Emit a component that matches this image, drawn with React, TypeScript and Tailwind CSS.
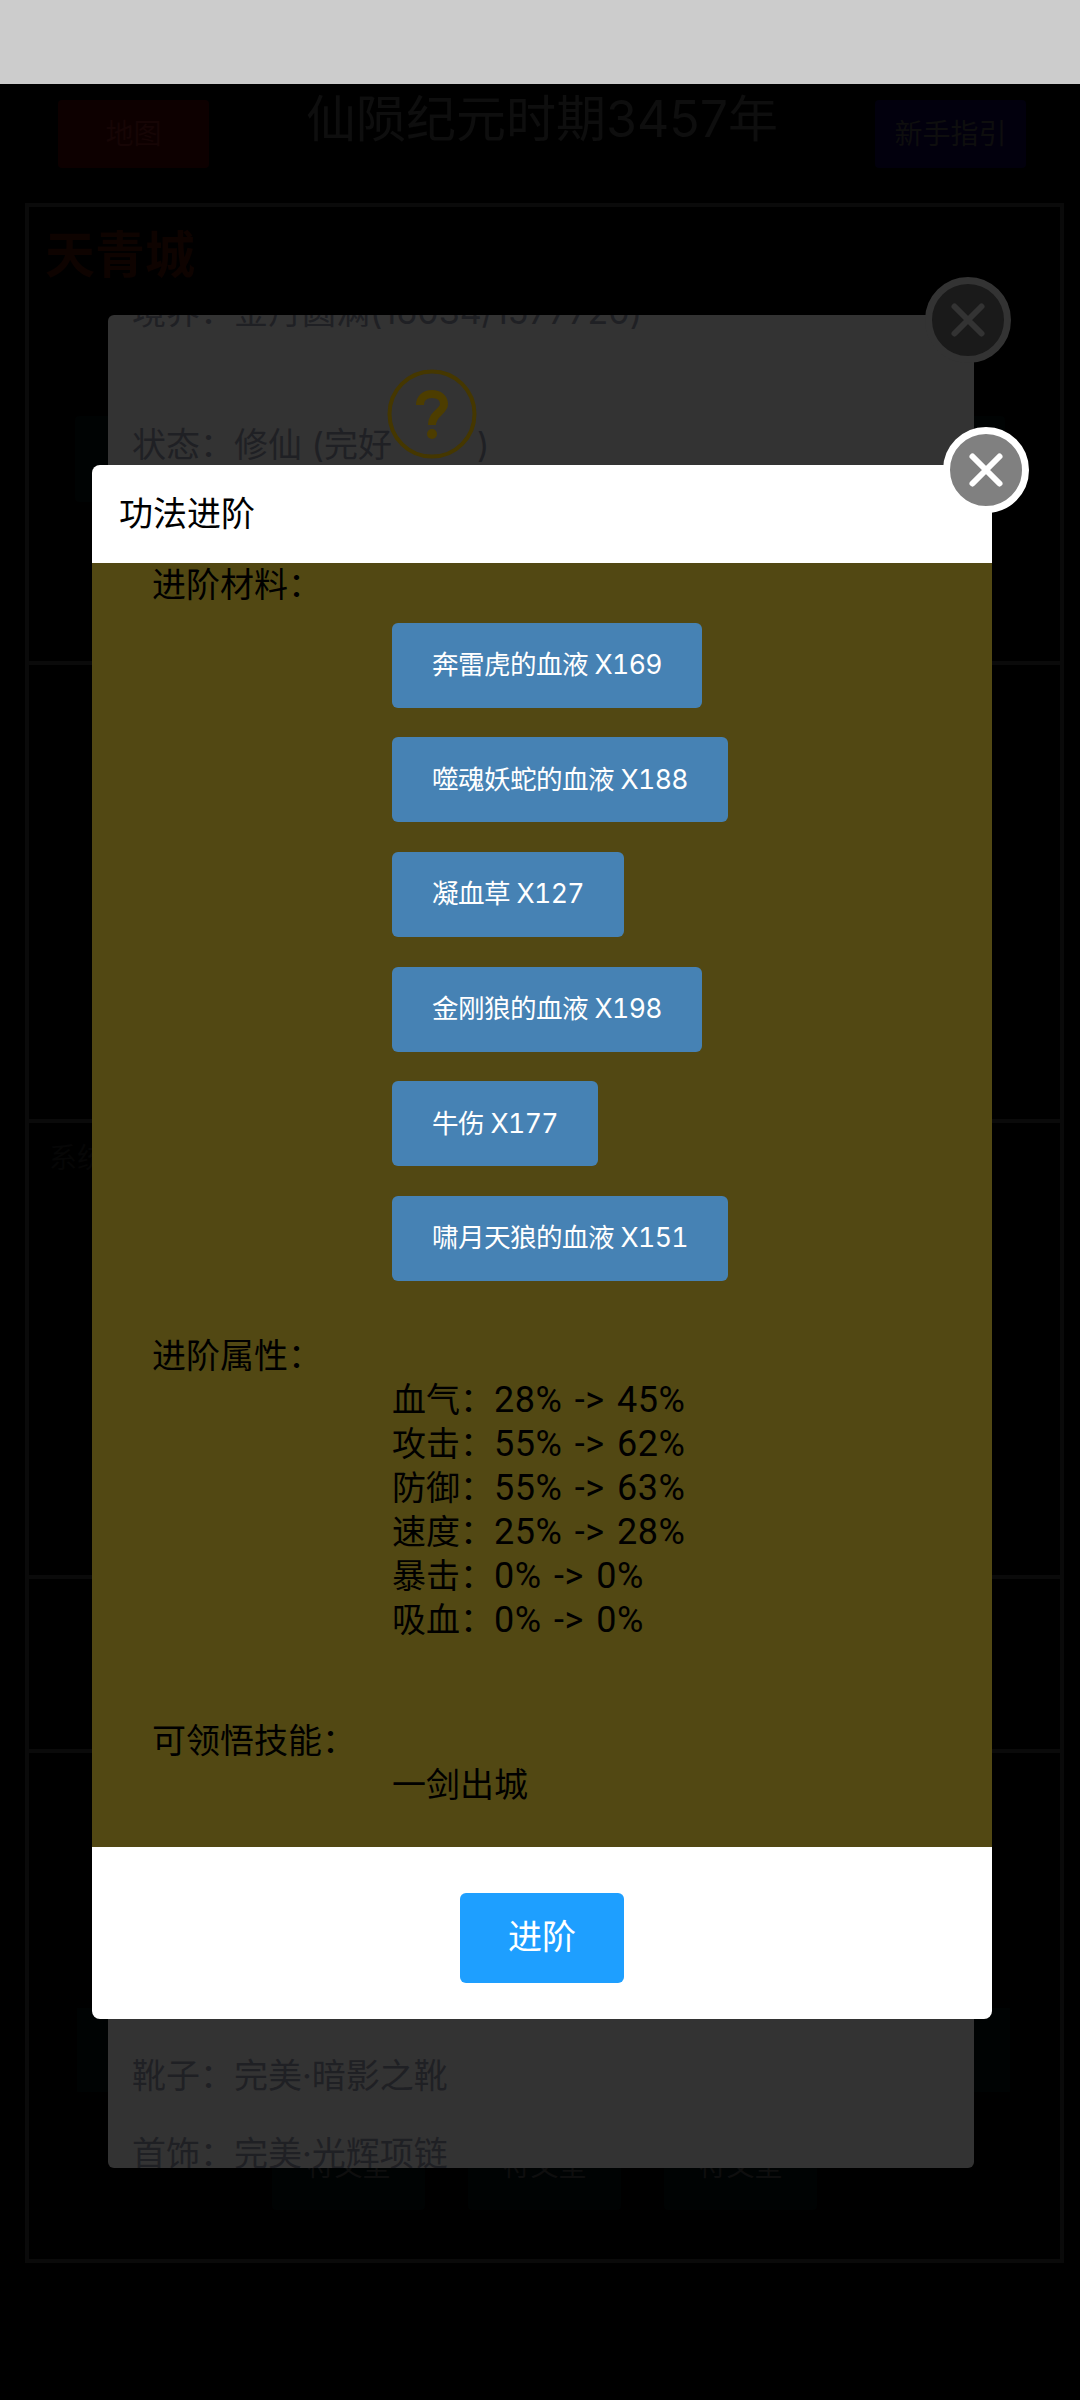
import React from 'react';

const FONT = 'font-["Inter","Noto_Sans_CJK_SC",sans-serif] [font-variant-ligatures:none]';

const materials = [
  '奔雷虎的血液 X169',
  '噬魂妖蛇的血液 X188',
  '凝血草 X127',
  '金刚狼的血液 X198',
  '牛伤 X177',
  '啸月天狼的血液 X151',
];

const stats = [
  ['血气：', '28% -> 45%'],
  ['攻击：', '55% -> 62%'],
  ['防御：', '55% -> 63%'],
  ['速度：', '25% -> 28%'],
  ['暴击：', '0% -> 0%'],
  ['吸血：', '0% -> 0%'],
];

interface CloseButtonProps {
  dim?: boolean;
}

const CloseButton: React.FC<CloseButtonProps> = ({ dim }) => (
  <svg
    viewBox="0 0 86 86"
    className="absolute right-[-37px] top-[-38px] h-[86px] w-[86px]"
  >
    <circle
      cx="43"
      cy="43"
      r="39.5"
      fill={dim ? '#1a1a1a' : '#808080'}
      stroke={dim ? '#333333' : '#ffffff'}
      strokeWidth="7"
    />
    <path
      d="M29.5 29.5L56.5 56.5M56.5 29.5L29.5 56.5"
      stroke={dim ? '#333333' : '#ffffff'}
      strokeWidth="6"
      strokeLinecap="round"
    />
  </svg>
);

const HelpIcon = () => (
  <svg viewBox="0 0 90 92" className="-ml-[5px] h-[92px] w-[90px] shrink-0 self-start">
    <circle cx="45" cy="46" r="42.5" fill="none" stroke="#453700" strokeWidth="4" />
    <path
      d="M33 37C33 30 38 26 45 26C52 26 57 30 57 36C57 44 45 45 45 57"
      fill="none"
      stroke="#4d3d00"
      strokeWidth="8"
    />
    <circle cx="45" cy="66" r="5" fill="#4d3d00" />
  </svg>
);

export default function App() {
  return (
    <div className={`relative min-h-[2400px] bg-black ${FONT}`}>
      <div className="h-[84px] bg-[#cccccc]" />

      {/* dimmed page behind the dialogs */}
      <div className="flex h-[119px] items-start justify-between pl-[58px] pr-[54px] pt-[11px]">
        <div className="mt-[5px] flex h-[68px] w-[151px] items-center justify-center rounded bg-[#0d0000] text-[28px] text-[#160505]">
          地图
        </div>
        <div className="text-[50px] leading-[48px] text-[#0e0e0e]">仙陨纪元时期3457年</div>
        <div className="mt-[5px] flex h-[68px] w-[151px] items-center justify-center rounded bg-[#02000d] text-[28px] text-[#0e0e0e]">
          新手指引
        </div>
      </div>

      <div className="ml-[25px] h-[2060px] w-[1039px] border-4 border-[#0a0a0a]">
        <div className="h-[458px] border-b-4 border-[#0a0a0a] px-4 pt-[22px]">
          <div className="text-[50px] font-bold leading-[52px] text-[#0e0300]">天青城</div>
          <div className="ml-[30px] mt-[135px] h-[86px] w-[930px] rounded bg-[#000303]" />
        </div>
        <div className="h-[458px] border-b-4 border-[#0a0a0a]" />
        <div className="h-[456px] border-b-4 border-[#0a0a0a] px-[20px] pt-[14px] text-[28px] text-[#060606]">
          系统
        </div>
        <div className="h-[174px] border-b-4 border-[#0a0a0a]" />
        <div className="pt-[255px]">
          <div className="ml-[48px] h-[84px] w-[933px] bg-[#000303]" />
          <div className="mt-[48px] flex justify-center gap-[43px]">
            {[0, 1, 2].map((i) => (
              <div key={i} className="flex h-[70px] w-[153px] justify-center rounded bg-[#000303] pt-[8px] text-[28px] leading-[36px] text-[#0e0e0e]">
                符文室
              </div>
            ))}
          </div>
        </div>
      </div>

      {/* first dialog, dimmed */}
      <div className="absolute left-[108px] top-[315px] h-[1853px] w-[866px] rounded-md bg-[#333333]">
        <div className="flex h-full flex-col justify-between overflow-hidden pl-[24px] text-[34px] leading-[44px] text-[#1f2024]">
          <div className="-mt-[25px]">
            <div>境界：金丹圆满(16034/1577720)</div>
            <div className="mt-[34px] flex h-[99px] items-end">
              <span>状态：修仙 (完好</span>
              <HelpIcon />
              <span>)</span>
            </div>
          </div>
          <div className="-mb-[8px]">
            <div>靴子：完美·暗影之靴</div>
            <div className="mt-[34px]">首饰：完美·光辉项链</div>
          </div>
        </div>
        <CloseButton dim />
      </div>

      {/* advancement dialog */}
      <div className="absolute left-[92px] top-[465px] w-[900px] rounded-lg bg-white">
        <div className="flex h-[98px] items-center pl-[27px] pb-[2px] text-[34px] text-black">功法进阶</div>

        <div className="bg-[#524813] pb-[40px] text-[34px] leading-[44px] text-black">
          <div className="pl-[60px]">进阶材料：</div>
          <div className="ml-[300px] mt-[15.5px] flex flex-col items-start gap-[29.7px]">
            {materials.map((name) => (
              <button
                key={name}
                className="h-[85px] rounded-md bg-[#4682b4] px-[40px] pb-[2px] text-[26.6px] tracking-[-0.6px] tabular-nums text-white"
              >
                {name}
              </button>
            ))}
          </div>

          <div className="mt-[53.5px] pl-[60px]">进阶属性：</div>
          <div className="ml-[300px]">
            {stats.map(([label, value]) => (
              <div key={label} className="flex">
                <span className="w-[102px]">{label}</span>
                <span className='font-["Roboto",sans-serif] text-[36px] tracking-[0.5px] [word-spacing:3px]'>{value}</span>
              </div>
            ))}
          </div>

          <div className="mt-[77px] pl-[60px]">可领悟技能：</div>
          <div className="ml-[300px]">一剑出城</div>
        </div>

        <div className="flex h-[172px] justify-center pt-[46px]">
          <button className="h-[90px] w-[164px] rounded-md bg-[#1e9fff] pb-[3px] text-[34px] text-white">
            进阶
          </button>
        </div>

        <CloseButton />
      </div>
    </div>
  );
}
